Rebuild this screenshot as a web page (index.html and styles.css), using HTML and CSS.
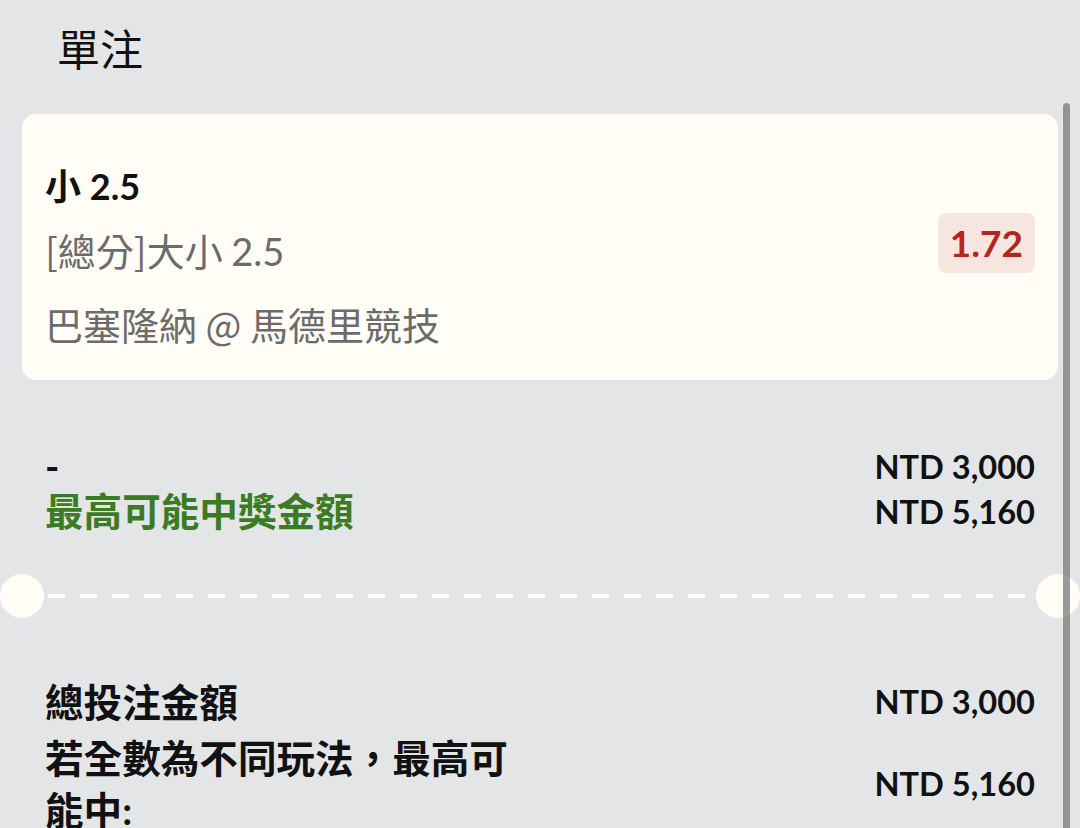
FILE: index.html
```html
<!DOCTYPE html>
<html lang="zh-Hant">
<head>
    <meta charset="UTF-8">
    <meta name="viewport" content="width=device-width, initial-scale=1.0">
    <title>單注</title>
    <link rel="stylesheet" href="styles.css">
</head>
<body>
    <div class="page">
        <h1 class="title">單注</h1>

        <div class="bet-card">
            <div class="bet-info">
                <div class="bet-pick">小 2.5</div>
                <div class="bet-market">[總分]大小 <span class="num">2.5</span></div>
                <div class="bet-match">巴塞隆納 @ 馬德里競技</div>
            </div>
            <div class="odds">1.72</div>
        </div>

        <div class="summary">
            <div class="row">
                <span class="label">-</span>
                <span class="amount">NTD 3,000</span>
            </div>
            <div class="row">
                <span class="label win">最高可能中獎金額</span>
                <span class="amount">NTD 5,160</span>
            </div>
        </div>

        <div class="ticket-cut">
            <span class="notch"></span>
            <span class="dash"></span>
            <span class="notch"></span>
        </div>

        <div class="totals">
            <div class="row tall">
                <span class="label">總投注金額</span>
                <span class="amount">NTD 3,000</span>
            </div>
            <div class="row tall">
                <span class="label wrap">若全數為不同玩法，最高可能中:</span>
                <span class="amount">NTD 5,160</span>
            </div>
        </div>
    </div>

    <div class="scrollbar"></div>
</body>
</html>
```

FILE: styles.css
```css
body {
    margin: 0;
    background-color: #e4e5e7;
    font-family: Lato, "Noto Sans CJK TC", sans-serif;
    color: #111;
    height: 828px;
    overflow: hidden;
}

.page {
    padding: 0 22px;
}

.title {
    margin: 0;
    padding: 21px 0 0 35px;
    font-family: "Noto Sans CJK TC", sans-serif;
    font-size: 43px;
    font-weight: 400;
    line-height: 53px;
}

.bet-card {
    margin-top: 40px;
    height: 266px;
    box-sizing: border-box;
    padding: 0 23px;
    background-color: #fffdf5;
    border-radius: 14px;
    display: flex;
    justify-content: space-between;
    align-items: center;
}

.bet-info {
    display: flex;
    flex-direction: column;
    align-self: flex-start;
    padding-top: 48px;
}

.bet-pick {
    font-size: 36px;
    font-weight: 700;
    line-height: 48px;
    margin-bottom: 16px;
}

.bet-market,
.bet-match {
    font-family: "Noto Sans CJK TC", sans-serif;
    font-size: 38px;
    line-height: 48px;
    color: #6b6b6b;
}

.bet-market .num {
    font-family: Lato, sans-serif;
}

.bet-market {
    margin-bottom: 25px;
}

.odds {
    margin-top: -8px;
    padding: 0 12px;
    height: 60px;
    line-height: 60px;
    background-color: #f6e6df;
    border-radius: 8px;
    color: #b3261e;
    font-size: 37px;
    font-weight: 700;
}

.summary {
    margin-top: 64px;
    padding: 0 23px;
}

.row {
    display: flex;
    justify-content: space-between;
    align-items: center;
    line-height: 45px;
}

.label {
    font-size: 38.6px;
    font-weight: 700;
}

.amount {
    font-size: 32.6px;
    font-weight: 700;
}

.win {
    color: #3b7c23;
}

.ticket-cut {
    margin: 40px -22px 0 -22px;
    display: flex;
    align-items: center;
}

.notch {
    width: 44px;
    height: 44px;
    border-radius: 50%;
    background-color: #fffdf5;
    flex-shrink: 0;
}

.dash {
    flex: 1;
    height: 4px;
    margin: 0 1px 0 4px;
    background: repeating-linear-gradient(90deg, #fffdf5 0 17px, transparent 17px 32px);
}

.totals {
    margin-top: 58px;
    padding: 0 23px;
    display: flex;
    flex-direction: column;
    gap: 4px;
}

.row.tall {
    line-height: 52px;
}

.wrap {
    max-width: 490px;
}

.scrollbar {
    position: absolute;
    top: 103px;
    right: 10px;
    width: 7px;
    height: 760px;
    border-radius: 4px;
    background-color: rgba(120, 120, 120, 0.75);
}
```
